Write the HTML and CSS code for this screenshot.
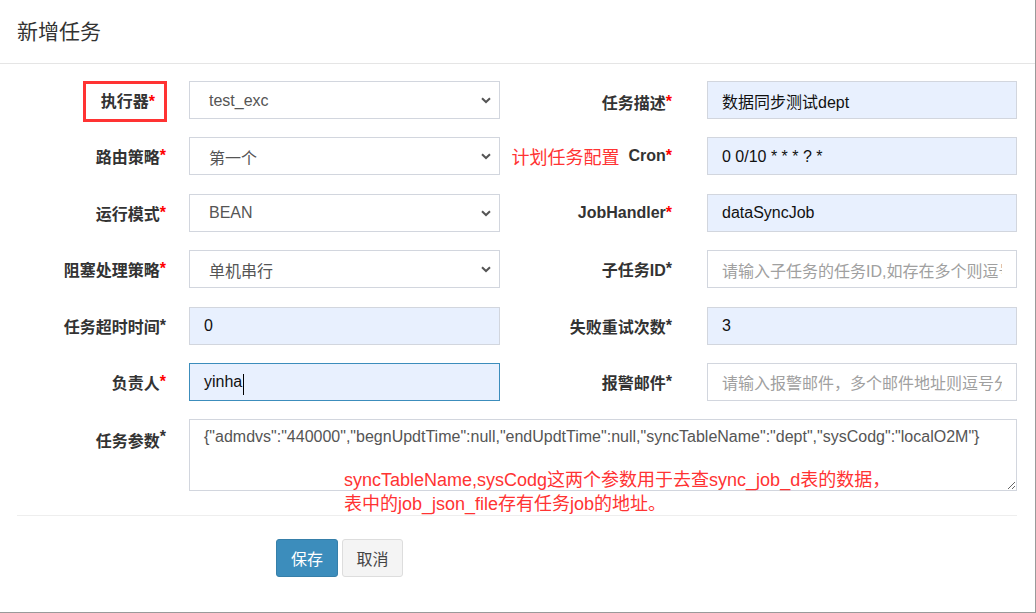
FILE: index.html
```html
<!DOCTYPE html>
<html lang="zh-CN">
<head>
<meta charset="utf-8">
<title>新增任务</title>
<link rel="stylesheet" href="styles.css">
</head>
<body>
<div class="modal">
  <div class="modal-header">
    <h4 class="modal-title">新增任务</h4>
  </div>
  <div class="modal-body">
    <form class="form">
      <div class="row">
        <label class="lbl"><span class="boxed">执行器<i class="req">*</i></span></label>
        <div class="ctl select"><span>test_exc</span><svg class="chev" width="10" height="7" viewBox="0 0 10 7"><path d="M1 1.2 L5 5 L9 1.2" fill="none" stroke="#555" stroke-width="2"/></svg></div>
        <label class="lbl lbl-r">任务描述<i class="req">*</i></label>
        <div class="ctl filled">数据同步测试dept</div>
      </div>
      <div class="row">
        <label class="lbl">路由策略<i class="req">*</i></label>
        <div class="ctl select"><span>第一个</span><svg class="chev" width="10" height="7" viewBox="0 0 10 7"><path d="M1 1.2 L5 5 L9 1.2" fill="none" stroke="#555" stroke-width="2"/></svg></div>
        <label class="lbl lbl-r"><span class="note-inline">计划任务配置</span>Cron<i class="req">*</i></label>
        <div class="ctl filled">0 0/10 * * * ? *</div>
      </div>
      <div class="row">
        <label class="lbl">运行模式<i class="req">*</i></label>
        <div class="ctl select"><span>BEAN</span><svg class="chev" width="10" height="7" viewBox="0 0 10 7"><path d="M1 1.2 L5 5 L9 1.2" fill="none" stroke="#555" stroke-width="2"/></svg></div>
        <label class="lbl lbl-r">JobHandler<i class="req">*</i></label>
        <div class="ctl filled">dataSyncJob</div>
      </div>
      <div class="row">
        <label class="lbl">阻塞处理策略<i class="req">*</i></label>
        <div class="ctl select"><span>单机串行</span><svg class="chev" width="10" height="7" viewBox="0 0 10 7"><path d="M1 1.2 L5 5 L9 1.2" fill="none" stroke="#555" stroke-width="2"/></svg></div>
        <label class="lbl lbl-r">子任务ID<i class="req plain">*</i></label>
        <div class="ctl"><div class="ph">请输入子任务的任务ID,如存在多个则逗号分隔</div></div>
      </div>
      <div class="row">
        <label class="lbl">任务超时时间<i class="req plain">*</i></label>
        <div class="ctl filled">0</div>
        <label class="lbl lbl-r">失败重试次数<i class="req plain">*</i></label>
        <div class="ctl filled">3</div>
      </div>
      <div class="row">
        <label class="lbl">负责人<i class="req">*</i></label>
        <div class="ctl filled focus">yinha<span class="caret"></span></div>
        <label class="lbl lbl-r">报警邮件<i class="req plain">*</i></label>
        <div class="ctl"><div class="ph">请输入报警邮件，多个邮件地址则逗号分隔</div></div>
      </div>
      <div class="row row-ta">
        <label class="lbl lbl-top">任务参数<i class="req plain">*</i></label>
        <div class="ta-wrap">
          <textarea class="ta" readonly>{"admdvs":"440000","begnUpdtTime":null,"endUpdtTime":null,"syncTableName":"dept","sysCodg":"localO2M"}</textarea>
          <div class="annot">syncTableName,sysCodg这两个参数用于去查sync_job_d表的数据，<br>表中的job_json_file存有任务job的地址。</div>
        </div>
      </div>
      <hr class="sep">
      <div class="actions">
        <button type="button" class="btn btn-primary">保存</button>
        <button type="button" class="btn btn-default">取消</button>
      </div>
    </form>
  </div>
</div>
</body>
</html>
```
FILE: styles.css
```css
* { box-sizing: border-box; }
html, body { margin: 0; padding: 0; background: #fff; }
body {
  font-family: "Liberation Sans", "Noto Sans CJK SC", sans-serif;
  color: #333;
}
.modal {
  width: 1036px;
  height: 613px;
  border-right: 1px solid #9a9a9a;
  border-bottom: 1px solid #9a9a9a;
  overflow: hidden;
}
.modal-header {
  height: 64px;
  border-bottom: 1px solid #e5e5e5;
  padding: 0 17px;
  display: flex;
  align-items: center;
}
.modal-title {
  margin: 0;
  font-size: 21px;
  font-weight: normal;
  color: #333;
  line-height: 24px;
}
.modal-body {
  padding: 17px 17px 0 17px;
}
.form { width: 1000px; }
.row {
  display: grid;
  grid-template-columns: 172px 311px 207px 310px;
  height: 38px;
  margin-bottom: 18.4px;
}
.lbl {
  display: flex;
  justify-content: flex-end;
  align-items: center;
  padding-right: 23px;
  font-size: 16px;
  font-weight: bold;
  color: #333;
  white-space: nowrap;
}
.lbl-r { padding-right: 35px; }
.req { font-style: normal; color: #f00; }
.req.plain { color: #333; }
.boxed {
  display: inline-block;
  border: 3px solid #ff3333;
  height: 41px;
  line-height: 35px;
  padding: 0 9px 0 15px;
  margin-right: -1px;
}
.note-inline {
  color: #ff3333;
  font-weight: normal;
  font-size: 18px;
  margin-right: 9px;
}
.ctl {
  height: 38px;
  border: 1px solid #d2d6de;
  padding: 1px 14px 0 14px;
  font-size: 16px;
  color: #555;
  display: flex;
  align-items: center;
  background: #fff;
  white-space: nowrap;
  overflow: hidden;
}
.select {
  padding-left: 19px;
  padding-right: 8px;
  justify-content: space-between;
}
.chev { display: block; }
.filled { background: #e8f0fe; color: #111; }
.focus { border-color: #3c8dbc; }
.caret {
  display: inline-block;
  width: 1px;
  height: 21px;
  background: #000;
  margin-left: 1px;
  position: relative;
  top: 2px;
}
.ph {
  color: #a0a0a0;
  overflow: hidden;
  width: 100%;
}
.row-ta { height: 72px; margin-bottom: 0; }
.lbl-top { align-items: flex-start; padding-top: 9px; }
.ta-wrap {
  grid-column: 2 / 5;
  position: relative;
}
.ta {
  display: block;
  width: 828px;
  height: 72px;
  border: 1px solid #d2d6de;
  border-radius: 0;
  padding: 7px 14px;
  font-family: "Liberation Sans", "Noto Sans CJK SC", sans-serif;
  font-size: 16px;
  line-height: 20px;
  color: #555;
  resize: vertical;
  outline: none;
  background: #fff;
}
.annot {
  position: absolute;
  left: 155px;
  top: 49px;
  color: #ff3333;
  font-size: 18px;
  line-height: 24px;
  white-space: nowrap;
}
.sep {
  margin: 24px 0 0 0;
  border: 0;
  border-top: 1px solid #eee;
  height: 0;
}
.actions {
  margin-top: 23px;
  padding-left: 259px;
  display: flex;
  gap: 4px;
}
.btn {
  height: 38px;
  border-radius: 3px;
  font-family: "Liberation Sans", "Noto Sans CJK SC", sans-serif;
  font-size: 16px;
  padding: 0;
  cursor: pointer;
}
.btn-primary {
  width: 62px;
  background: #3c8dbc;
  border: 1px solid #367fa9;
  color: #fff;
}
.btn-default {
  width: 61px;
  background: #f4f4f4;
  border: 1px solid #ddd;
  color: #444;
}
```
